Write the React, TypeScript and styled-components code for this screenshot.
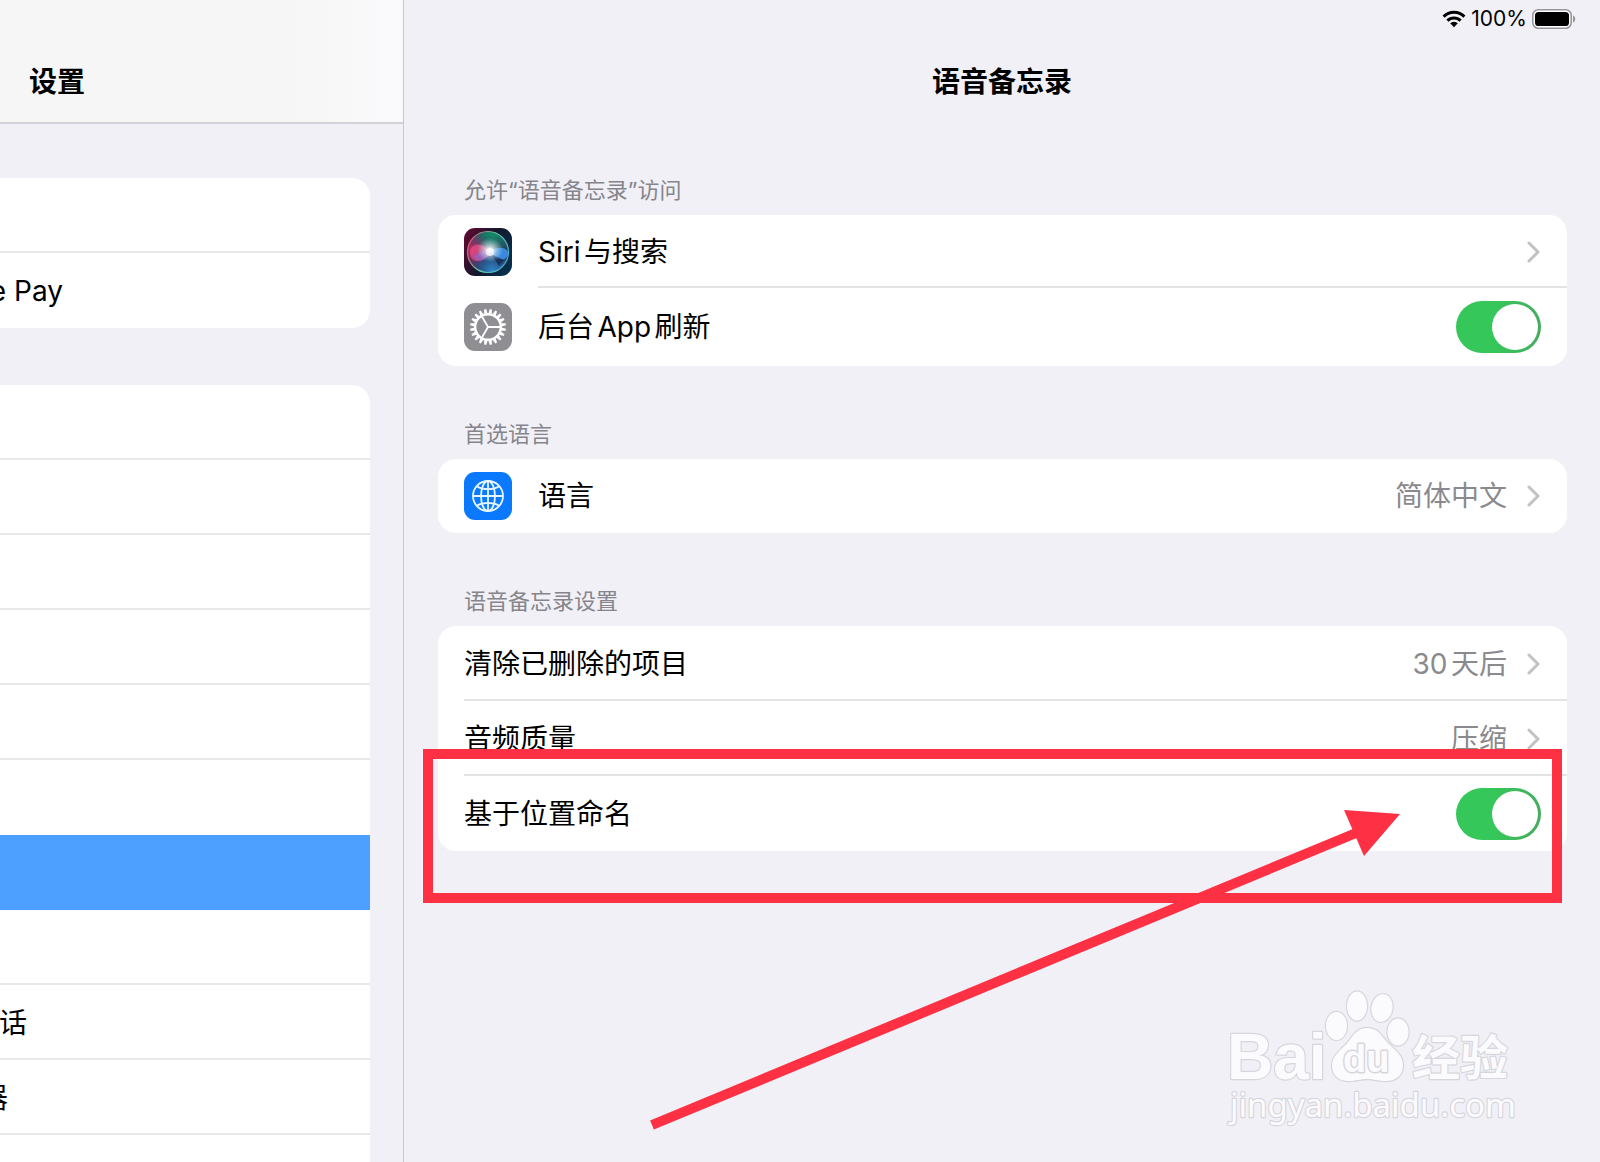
import React from 'react';
import styled, { createGlobalStyle } from 'styled-components';

const GlobalStyle = createGlobalStyle`
  *, *::before, *::after { box-sizing: border-box; }
  body {
    margin: 0;
    background: #f1f0f7;
    color: #000;
    font-family: Inter, "Noto Sans CJK SC", sans-serif;
    font-size: 28px;
    line-height: 40px;
    text-autospace: normal;
  }
`;

const ACCENT = '#fd3044';

const Screen = styled.div`
  display: flex;
  height: 100vh;
  min-height: 900px;
  overflow: hidden;
`;

/* ---------- sidebar ---------- */

const Sidebar = styled.nav`
  flex: 0 0 404px;
  display: flex;
  flex-direction: column;
  border-right: 1px solid #c9c8ce;
  overflow: hidden;
`;

const SidebarHeader = styled.header`
  flex: none;
  height: 124px;
  padding: 62px 29px 0;
  border-bottom: 2px solid #d3d2d9;
  background: linear-gradient(90deg, #f6f6f6 70%, #fafafc);
`;

const Title = styled.h1`
  margin: 0;
  font-size: 28px;
  line-height: 40px;
  font-weight: 700;
`;

const SidebarBody = styled.div`
  display: flex;
  flex-direction: column;
  gap: 57px;
  padding: 54px 33px 0 0;
`;

const SideList = styled.ul`
  margin: 0;
  padding: 0;
  list-style: none;
  background: #fff;
  border-radius: 0 18px 18px 0;
  overflow: hidden;
`;

const SideItem = styled.li`
  height: 75px;
  border-bottom: 2px solid #e8e8e9;
  &:last-child { border-bottom-color: transparent; }
  &:has(+ li > [aria-current]) { border-bottom-color: transparent; }
  &:has(> [aria-current]) { border-bottom-color: #4da0ff; }
`;

const SideLink = styled.a<{ $reach: number }>`
  display: flex;
  align-items: center;
  height: 100%;
  padding-top: 2px;
  color: #000;
  text-decoration: none;
  &[aria-current] { background: #4da0ff; }
  span {
    display: flex;
    justify-content: flex-end;
    width: ${(p) => p.$reach}px;
    white-space: nowrap;
  }
`;

/* ---------- detail pane ---------- */

const Main = styled.main`
  position: relative;
  flex: 1;
  min-width: 0;
  display: flex;
  flex-direction: column;
`;

const StatusBar = styled.div`
  display: flex;
  align-items: center;
  justify-content: flex-end;
  gap: 5px;
  height: 38px;
  padding-right: 24px;
  font-size: 21px;
  line-height: 24px;
`;

const MainHeader = styled.header`
  display: flex;
  justify-content: center;
  height: 86px;
  padding-top: 24px;
`;

const Groups = styled.div`
  display: flex;
  flex-direction: column;
  gap: 52px;
  padding: 50px 33px 0 34px;
`;

const GroupTitle = styled.h2`
  margin: 0;
  padding: 0 26px 9px;
  font-size: 22px;
  line-height: 32px;
  font-weight: 400;
  color: #85858b;
`;

const CardWrap = styled.div`
  position: relative;
`;

const Card = styled.div`
  display: flex;
  flex-direction: column;
  background: #fff;
  border-radius: 18px;
  overflow: hidden;
`;

const RowBase = styled.div<{ $height: number }>`
  display: flex;
  align-items: center;
  gap: 26px;
  width: 100%;
  height: ${(p) => p.$height}px;
  padding: 0 0 0 26px;
  border: 0;
  background: none;
  color: inherit;
  font: inherit;
  text-align: left;
`;

const RowBody = styled.div<{ $divided: boolean }>`
  flex: 1;
  display: flex;
  align-items: center;
  height: 100%;
  padding: 2px 26px 0 0;
  border-bottom: 2px solid ${(p) => (p.$divided ? '#e3e3e5' : 'transparent')};
`;

const RowLabel = styled.span`
  flex: 1;
`;

const RowValue = styled.span`
  color: #8a8a8e;
  margin-right: 20px;
`;

const Switch = styled.input`
  appearance: none;
  margin: 0;
  width: 85px;
  height: 52px;
  padding: 3px;
  border-radius: 26px;
  background: #d9d9dd;
  &::before {
    content: '';
    display: block;
    width: 46px;
    height: 46px;
    border-radius: 50%;
    background: #fff;
  }
  &:checked { background: linear-gradient(90deg, #35c759 45%, #45ac60); }
  &:checked::before { margin-left: 33px; }
`;

const Tile = styled.svg`
  flex: none;
  display: block;
  width: 48px;
  height: 48px;
  border-radius: 11px;
`;

/* ---------- overlays ---------- */

const Highlight = styled.div`
  position: absolute;
  top: 123px;
  left: -15px;
  right: 5px;
  height: 154px;
  border: 10px solid ${ACCENT};
  pointer-events: none;
`;

const Arrow = styled.svg`
  position: absolute;
  top: 174px;
  right: 162px;
  width: 760px;
  height: 340px;
  pointer-events: none;
`;

const Watermark = styled.svg`
  position: absolute;
  right: 60px;
  bottom: 22px;
  width: 340px;
  height: 170px;
  pointer-events: none;
`;

/* ---------- icons ---------- */

const WifiIcon = () => (
  <svg width="24" height="18" viewBox="0 0 24 18" aria-hidden="true">
    <g fill="none" stroke="#000" strokeWidth="3">
      <path d="M1.6 6.6a14.7 14.7 0 0 1 20.8 0" />
      <path d="M5.4 10.6a9.4 9.4 0 0 1 13.2 0" />
    </g>
    <path d="M12 17.2 8.2 13.3a5.5 5.5 0 0 1 7.6 0Z" />
  </svg>
);

const BatteryIcon = () => (
  <svg width="44" height="20" viewBox="0 0 44 20" aria-hidden="true">
    <rect x="0.8" y="0.8" width="38.4" height="18.4" rx="5.5" fill="#fff" stroke="#97969c" strokeWidth="1.6" />
    <rect x="3" y="3" width="34" height="14" rx="3.6" />
    <path d="M41 6.5c3 1 3 6 0 7Z" fill="#97969c" />
  </svg>
);

const Chevron = () => (
  <svg width="14" height="22" viewBox="0 0 14 22" aria-hidden="true">
    <path d="M2 2l9 9-9 9" fill="none" stroke="#c2c2c5" strokeWidth="3" strokeLinecap="round" strokeLinejoin="round" />
  </svg>
);

const SiriIcon = () => (
  <Tile viewBox="0 0 48 48" aria-hidden="true">
    <defs>
      <linearGradient id="siriBg" x1="0" y1="0.2" x2="1" y2="0.7">
        <stop offset="0" stopColor="#5a0c30" />
        <stop offset="0.5" stopColor="#12172c" />
        <stop offset="1" stopColor="#06304a" />
      </linearGradient>
      <radialGradient id="siriGreen" cx="0.6" cy="0.05" r="0.6">
        <stop offset="0" stopColor="#128a66" />
        <stop offset="1" stopColor="#1d9a75" stopOpacity="0" />
      </radialGradient>
      <radialGradient id="siriPink" cx="0.1" cy="0.45" r="0.45">
        <stop offset="0" stopColor="#c42a60" />
        <stop offset="1" stopColor="#b02a72" stopOpacity="0" />
      </radialGradient>
      <radialGradient id="siriBlue" cx="0.6" cy="0.95" r="0.6">
        <stop offset="0" stopColor="#2f86c8" />
        <stop offset="1" stopColor="#22579c" stopOpacity="0" />
      </radialGradient>
      <radialGradient id="siriGlow" cx="0.5" cy="0.5" r="0.5">
        <stop offset="0" stopColor="#fff" />
        <stop offset="0.25" stopColor="#fff" stopOpacity="0.75" />
        <stop offset="1" stopColor="#bfe6f5" stopOpacity="0" />
      </radialGradient>
      <linearGradient id="siriRing" x1="0" y1="0.3" x2="1" y2="0.7">
        <stop offset="0" stopColor="#e0506f" />
        <stop offset="0.5" stopColor="#67c9a9" />
        <stop offset="1" stopColor="#46a4d8" />
      </linearGradient>
    </defs>
    <rect width="48" height="48" fill="url(#siriBg)" />
    <circle cx="24" cy="24" r="20.5" fill="#26375a" />
    <circle cx="24" cy="24" r="20.5" fill="url(#siriGreen)" />
    <circle cx="24" cy="24" r="20.5" fill="url(#siriBlue)" />
    <circle cx="24" cy="24" r="20.5" fill="url(#siriPink)" />
    <path d="M26 25C20 14 8 14 6 23c-1 12 12 14 20 2Z" fill="#f2528a" opacity="0.65" />
    <path d="M26 25c-6-3-12-2-16 3 3 7 11 6 16-3Z" fill="#7f6fd8" opacity="0.55" />
    <path d="M26 24c6-6 16-5 18 0 1 9-11 11-18 0Z" fill="#3f95f2" opacity="0.85" />
    <path d="M27 26l13 6-5 6Z" fill="#101a3c" opacity="0.6" />
    <ellipse cx="26" cy="22" rx="13" ry="12" fill="url(#siriGlow)" />
    <circle cx="26" cy="24" r="4" fill="#fff" opacity="0.7" />
    <circle cx="24" cy="24" r="20.5" fill="none" stroke="url(#siriRing)" strokeWidth="1.2" />
  </Tile>
);

const TEETH = Array.from({ length: 20 }, (_, i) => i * 18);

const GearIcon = () => (
  <Tile viewBox="0 0 48 48" aria-hidden="true">
    <rect width="48" height="48" fill="#8e8e93" />
    <g transform="translate(24 24)" stroke="#fff" fill="none">
      {TEETH.map((a) => (
        <path key={a} d="M-1.7-13.5-1-18H1L1.7-13.5Z" fill="#fff" stroke="none" transform={`rotate(${a + 9})`} />
      ))}
      <circle r="12.8" strokeWidth="2.4" />
      {[0, 120, 240].map((a) => (
        <path key={a} d="M0 0H12" strokeWidth="1.9" transform={`rotate(${a})`} />
      ))}
    </g>
  </Tile>
);

const GlobeIcon = () => (
  <Tile viewBox="0 0 48 48" aria-hidden="true">
    <rect width="48" height="48" fill="#0b79fe" />
    <g fill="none" stroke="#e6f6ff" strokeWidth="1.8">
      <circle cx="24" cy="24" r="15" />
      <ellipse cx="24" cy="24" rx="7" ry="15" />
      <path d="M24 9v30M9 24h30M13 14.5c6 3.6 16 3.6 22 0M13 33.5c6-3.6 16-3.6 22 0" />
    </g>
  </Tile>
);

/* ---------- rows ---------- */

type RowProps = { label: string; icon?: React.ReactNode; divided?: boolean; height?: number };

const LinkRow = ({ label, icon, divided = false, height = 75, value }: RowProps & { value?: string }) => (
  <RowBase as="button" type="button" $height={height}>
    {icon}
    <RowBody as="span" $divided={divided}>
      <RowLabel>{label}</RowLabel>
      {value && <RowValue>{value}</RowValue>}
      <Chevron />
    </RowBody>
  </RowBase>
);

const SwitchRow = ({ label, icon, divided = false, height = 75 }: RowProps) => (
  <RowBase as="label" $height={height}>
    {icon}
    <RowBody as="span" $divided={divided}>
      <RowLabel>{label}</RowLabel>
      <Switch type="checkbox" role="switch" defaultChecked />
    </RowBody>
  </RowBase>
);

/* ---------- data ---------- */

type SideEntry = { text?: string; reach?: number; current?: boolean };

const sideGroups: SideEntry[][] = [
  [{}, { text: 'e Pay', reach: 63 }],
  [{}, {}, {}, {}, {}, {}, { current: true }, {}, { text: '话', reach: 27 }, { text: '器', reach: 8 }, {}],
];

export default function App() {
  return (
    <>
      <GlobalStyle />
      <Screen>
        <Sidebar>
          <SidebarHeader>
            <Title>设置</Title>
          </SidebarHeader>
          <SidebarBody>
            {sideGroups.map((group, g) => (
              <SideList key={g}>
                {group.map((item, i) => (
                  <SideItem key={i}>
                    <SideLink href="#" $reach={item.reach ?? 0} aria-current={item.current ? 'page' : undefined}>
                      {item.text && <span>{item.text}</span>}
                    </SideLink>
                  </SideItem>
                ))}
              </SideList>
            ))}
          </SidebarBody>
        </Sidebar>

        <Main>
          <StatusBar>
            <WifiIcon />
            <span>100%</span>
            <BatteryIcon />
          </StatusBar>
          <MainHeader>
            <Title>语音备忘录</Title>
          </MainHeader>
          <Groups>
            <section>
              <GroupTitle>允许“语音备忘录”访问</GroupTitle>
              <Card>
                <LinkRow label="Siri与搜索" icon={<SiriIcon />} divided height={73} />
                <SwitchRow label="后台App刷新" icon={<GearIcon />} height={78} />
              </Card>
            </section>
            <section>
              <GroupTitle>首选语言</GroupTitle>
              <Card>
                <LinkRow label="语言" icon={<GlobeIcon />} value="简体中文" height={74} />
              </Card>
            </section>
            <section>
              <GroupTitle>语音备忘录设置</GroupTitle>
              <CardWrap>
                <Card>
                  <LinkRow label="清除已删除的项目" value="30天后" divided />
                  <LinkRow label="音频质量" value="压缩" divided />
                  <SwitchRow label="基于位置命名" />
                </Card>
                <Highlight />
                <Arrow viewBox="645 800 760 340" aria-hidden="true">
                  <path d="M652 1125 1356 833" stroke={ACCENT} strokeWidth="10" />
                  <path d="M1400 814 1344 810 1364 856Z" fill={ACCENT} />
                </Arrow>
              </CardWrap>
            </section>
          </Groups>
          <Watermark viewBox="0 0 340 170" aria-hidden="true">
            <g fill="#fbfbfd" stroke="#d7d6dc" strokeWidth="2.4" paintOrder="stroke" strokeLinejoin="round">
              <text x="27" y="109" fontFamily="Liberation Sans, sans-serif" fontWeight="700" fontSize="64">Bai</text>
              <ellipse cx="136.5" cy="56" rx="10.5" ry="14" />
              <ellipse cx="157" cy="36" rx="10" ry="14.5" />
              <ellipse cx="182" cy="38" rx="10.5" ry="14" transform="rotate(10 182 38)" />
              <ellipse cx="198" cy="62" rx="10.5" ry="13.5" />
              <path d="M167 58c-9 0-13 6-18 13-6 8-17 13-17 25 0 9 7 15 16 15 8 0 12-2 19-2s11 2 19 2c10 0 17-6 17-16 0-11-10-16-17-24-6-8-10-13-19-13Z" />
              <text x="143" y="102" fontFamily="Liberation Sans, sans-serif" fontWeight="700" fontSize="38" strokeWidth="3">du</text>
              <text x="212" y="105" fontFamily="Noto Sans CJK SC, sans-serif" fontWeight="700" fontSize="48">经验</text>
              <text x="30" y="147" fontFamily="Noto Sans, sans-serif" fontSize="33">jingyan.baidu.com</text>
            </g>
          </Watermark>
        </Main>
      </Screen>
    </>
  );
}
